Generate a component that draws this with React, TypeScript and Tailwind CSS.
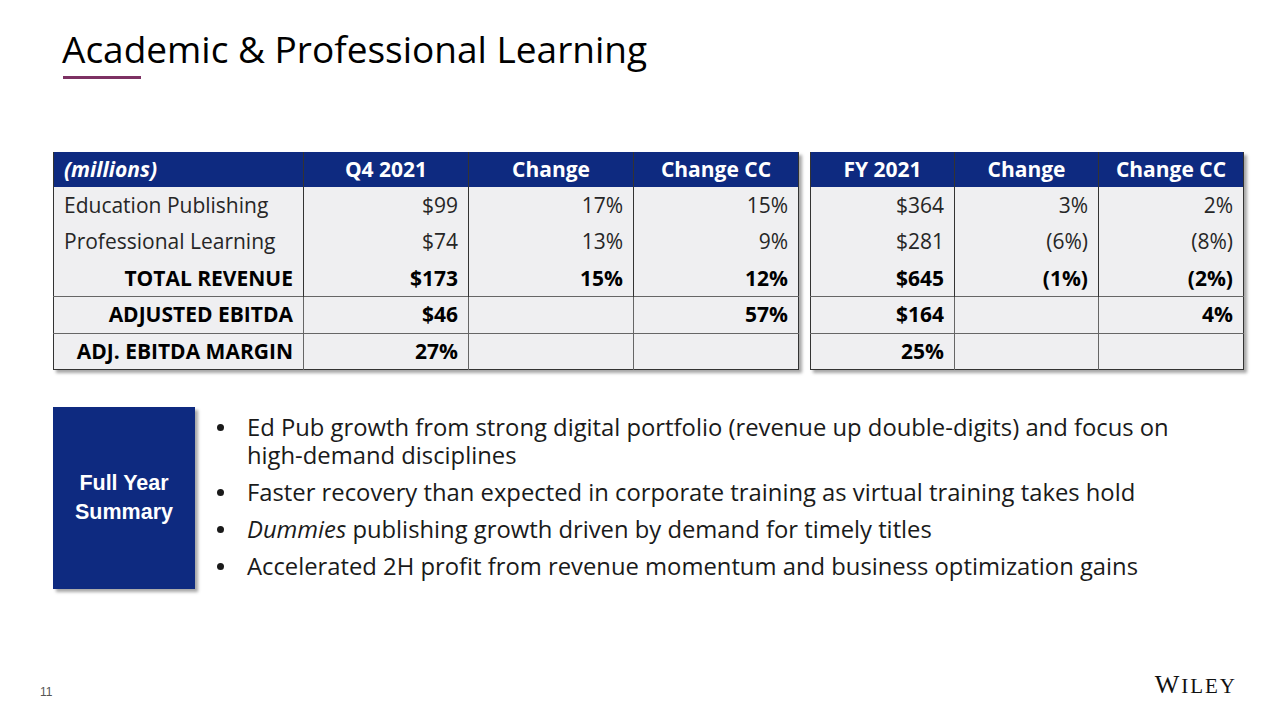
const font = { fontFamily: '"Open Sans", "Liberation Sans", sans-serif' };

type Row = {
  label: string;
  q4: string;
  q4Change: string;
  q4Cc: string;
  fy: string;
  fyChange: string;
  fyCc: string;
  bold?: boolean;
  divider?: boolean;
};

const rows: Row[] = [
  { label: "Education Publishing", q4: "$99", q4Change: "17%", q4Cc: "15%", fy: "$364", fyChange: "3%", fyCc: "2%" },
  { label: "Professional Learning", q4: "$74", q4Change: "13%", q4Cc: "9%", fy: "$281", fyChange: "(6%)", fyCc: "(8%)" },
  { label: "TOTAL REVENUE", q4: "$173", q4Change: "15%", q4Cc: "12%", fy: "$645", fyChange: "(1%)", fyCc: "(2%)", bold: true },
  { label: "ADJUSTED EBITDA", q4: "$46", q4Change: "", q4Cc: "57%", fy: "$164", fyChange: "", fyCc: "4%", bold: true, divider: true },
  { label: "ADJ. EBITDA MARGIN", q4: "27%", q4Change: "", q4Cc: "", fy: "25%", fyChange: "", fyCc: "", bold: true, divider: true },
];

const bullets = [
  <>Ed Pub growth from strong digital portfolio (revenue up double-digits) and focus on high-demand disciplines</>,
  <>Faster recovery than expected in corporate training as virtual training takes hold</>,
  <>
    <em>Dummies</em> publishing growth driven by demand for timely titles
  </>,
  <>Accelerated 2H profit from revenue momentum and business optimization gains</>,
];

function Cell({ value, row, first }: { value: string; row: Row; first?: boolean }) {
  return (
    <td
      className={`h-[36.5px] pr-[10px] text-right leading-none ${first ? "" : "border-l border-[#333]"} ${
        row.divider ? "border-t border-[#666]" : ""
      } ${row.bold ? "font-bold text-black" : "text-[#262626]"}`}
    >
      {value}
    </td>
  );
}

function Header({ children, first }: { children: string; first?: boolean }) {
  return (
    <th className={`h-[35px] text-center font-bold text-white ${first ? "" : "border-l border-[#333]"}`}>
      {children}
    </th>
  );
}

export default function App() {
  return (
    <div className="relative flex h-[720px] w-[1280px] flex-col bg-white" style={font}>
      <div className="pl-[62px] pt-[25px]">
        <h1 className="text-[37px] font-normal leading-[48px] text-black">
          Academic &amp; Professional Learning
        </h1>
        <div className="mt-[3px] ml-[1px] h-[3px] w-[78px] bg-[#7d3163]" />
      </div>

      <div className="mt-[73px] flex gap-[11px] pl-[53px] text-[21px]">
        <table className="w-[745px] table-fixed border-collapse border-b border-l border-r border-[#333] bg-[#efeff1] shadow-[3px_3px_3px_rgba(0,0,0,0.35)]">
          <colgroup>
            <col className="w-[250px]" />
            <col className="w-[165px]" />
            <col className="w-[165px]" />
            <col className="w-[165px]" />
          </colgroup>
          <thead className="bg-[#0e2a80]">
            <tr>
              <th className="h-[35px] pl-[10px] text-left font-bold italic text-white">(millions)</th>
              <Header>Q4 2021</Header>
              <Header>Change</Header>
              <Header>Change CC</Header>
            </tr>
          </thead>
          <tbody>
            {rows.map((row) => (
              <tr key={row.label}>
                <td
                  className={`h-[36.5px] leading-none ${row.bold ? "pr-[10px] text-right font-bold text-black" : "pl-[10px] text-left text-[#262626]"} ${
                    row.divider ? "border-t border-[#666]" : ""
                  }`}
                >
                  {row.label}
                </td>
                <Cell value={row.q4} row={row} />
                <Cell value={row.q4Change} row={row} />
                <Cell value={row.q4Cc} row={row} />
              </tr>
            ))}
          </tbody>
        </table>

        <table className="w-[433px] table-fixed border-collapse border-b border-l border-r border-[#333] bg-[#efeff1] shadow-[3px_3px_3px_rgba(0,0,0,0.35)]">
          <colgroup>
            <col className="w-[144px]" />
            <col className="w-[144px]" />
            <col className="w-[145px]" />
          </colgroup>
          <thead className="bg-[#0e2a80]">
            <tr>
              <Header first>FY 2021</Header>
              <Header>Change</Header>
              <Header>Change CC</Header>
            </tr>
          </thead>
          <tbody>
            {rows.map((row) => (
              <tr key={row.label}>
                <Cell value={row.fy} row={row} first />
                <Cell value={row.fyChange} row={row} />
                <Cell value={row.fyCc} row={row} />
              </tr>
            ))}
          </tbody>
        </table>
      </div>

      <div className="mt-[37px] flex pl-[53px]">
        <div
          className="flex h-[182px] w-[142px] items-center justify-center bg-[#0e2a80] text-center text-[21.5px] font-bold leading-[29px] text-white shadow-[3px_3px_3px_rgba(0,0,0,0.35)]"
          style={{ fontFamily: '"Liberation Sans", Arial, sans-serif' }}
        >
          Full Year
          <br />
          Summary
        </div>
        <ul className="ml-[22px] mt-[6px] flex w-[980px] flex-col gap-[9px] text-[23.8px] leading-[28px] text-[#1a1a1a]">
          {bullets.map((b, i) => (
            <li key={i} className="flex">
              <span className="flex h-[28px] w-[30px] shrink-0 items-center">
                <span className="h-[7px] w-[7px] rounded-full bg-[#1a1a1a]" />
              </span>
              <span className="w-[945px]">{b}</span>
            </li>
          ))}
        </ul>
      </div>

      <div className="mt-auto flex items-end justify-between pb-[22px] pl-[40px] pr-[43px]">
        <span className="text-[12px] leading-none text-[#555]" style={{ fontFamily: '"Liberation Sans", Arial, sans-serif' }}>
          11
        </span>
        <span
          className="leading-none tracking-[2px] text-[#111]"
          style={{ fontFamily: '"Liberation Serif", "Times New Roman", serif' }}
        >
          <span className="text-[26px]">W</span>
          <span className="text-[21px]">ILEY</span>
        </span>
      </div>
    </div>
  );
}
